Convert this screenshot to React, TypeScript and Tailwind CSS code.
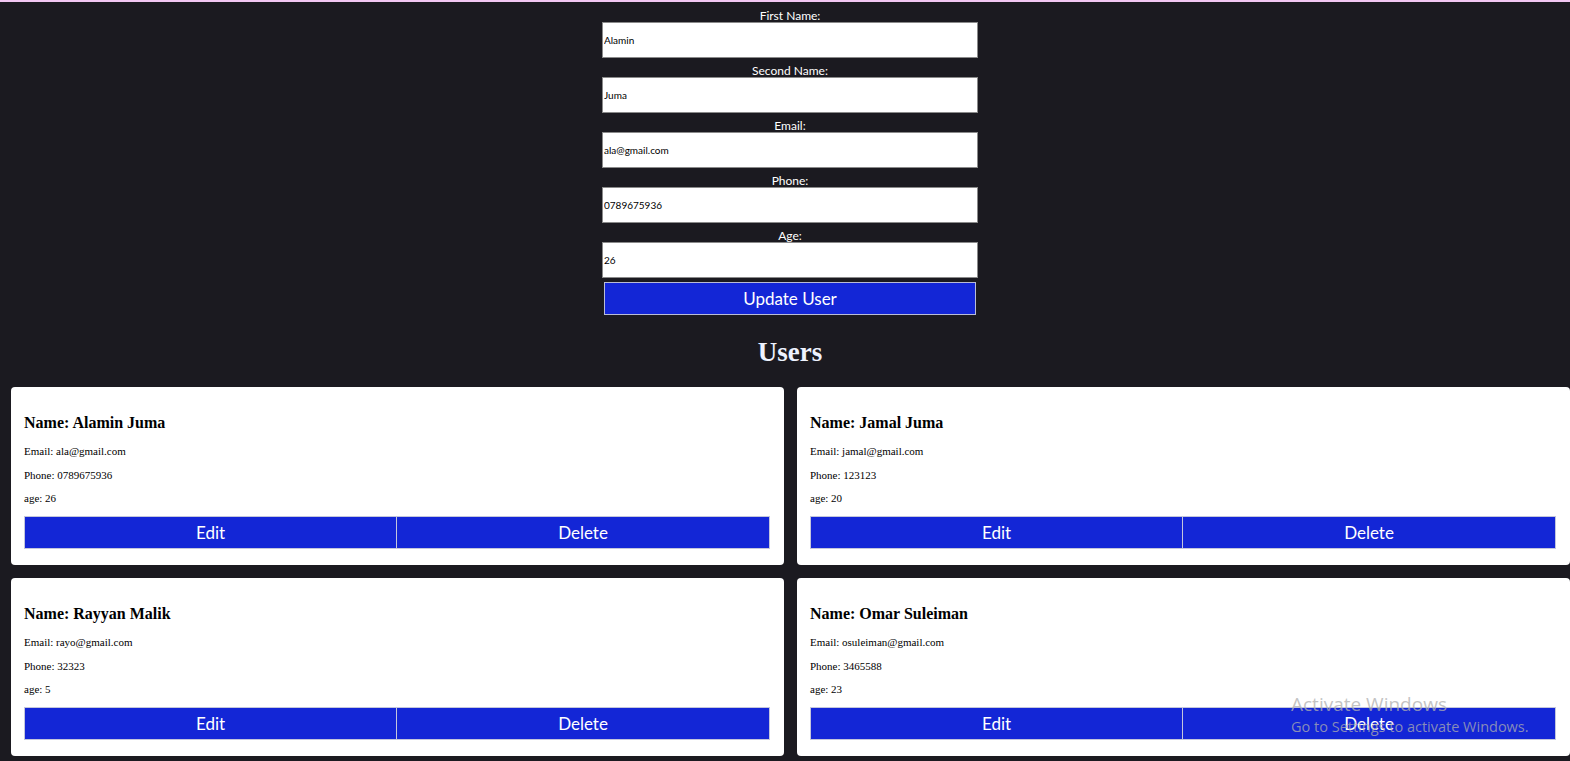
import React from "react";

interface User {
  first: string;
  last: string;
  email: string;
  phone: string;
  age: number;
}

const users: User[] = [
  { first: "Alamin", last: "Juma", email: "ala@gmail.com", phone: "0789675936", age: 26 },
  { first: "Jamal", last: "Juma", email: "jamal@gmail.com", phone: "123123", age: 20 },
  { first: "Rayyan", last: "Malik", email: "rayo@gmail.com", phone: "32323", age: 5 },
  { first: "Omar", last: "Suleiman", email: "osuleiman@gmail.com", phone: "3465588", age: 23 },
];

const fields = [
  { label: "First Name:", value: "Alamin" },
  { label: "Second Name:", value: "Juma" },
  { label: "Email:", value: "ala@gmail.com" },
  { label: "Phone:", value: "0789675936" },
  { label: "Age:", value: "26" },
];

const sans = "font-['Lato','Open_Sans',sans-serif]";
const serif = "font-['Liberation_Serif','Times_New_Roman',serif]";

const UserCard = ({ user }: { user: User }) => (
  <div className={`bg-white rounded-[4px] pt-[27px] pb-[16px] pl-[13px] pr-[14px] text-black ${serif}`}>
    <h3 className="text-[16px] leading-[18px] font-bold">
      Name: {user.first} {user.last}
    </h3>
    <p className="text-[11px] leading-[14px] mt-[12px]">Email: {user.email}</p>
    <p className="text-[11px] leading-[14px] mt-[10px]">Phone: {user.phone}</p>
    <p className="text-[11px] leading-[14px] mt-[9px]">age: {user.age}</p>
    <div className={`grid grid-cols-2 mt-[11px] ${sans}`}>
      <button className="h-[33px] pt-[1px] bg-[#1326d6] text-white text-[17px] border border-[#c3c6dc]">Edit</button>
      <button className="h-[33px] pt-[1px] bg-[#1326d6] text-white text-[17px] border border-l-0 border-[#c3c6dc]">Delete</button>
    </div>
  </div>
);

export default function App() {
  return (
    <div className="relative min-h-[761px] bg-[#1b1a20] border-t-2 border-[#f2c7f2] pb-[4px]">
      <div className="pl-[10px]">
        {/* update form */}
        <form className={`w-[376px] mx-auto pt-[5px] flex flex-col ${sans}`} onSubmit={(e) => e.preventDefault()}>
          {fields.map((f, i) => (
            <div key={f.label} className={i > 0 ? "mt-[4px]" : ""}>
              <label className="block text-center text-white text-[12px] leading-[15px] pt-[1px] -mb-[1px]">{f.label}</label>
              <input
                defaultValue={f.value}
                className="block w-full h-[36px] bg-white border border-[#8a8a8a] px-[1px] text-[10px] text-black outline-none"
              />
            </div>
          ))}
          <button
            type="submit"
            className="mt-[4px] mx-[2px] h-[33px] bg-[#1326d6] border border-[#b9bcd6] text-white text-[17px]"
          >
            Update User
          </button>
        </form>

        <h2 className={`text-center text-[#eef3ff] text-[27px] leading-[30px] font-bold mt-[22px] mb-[20px] ${serif}`}>
          Users
        </h2>
      </div>

      <div className="grid grid-cols-2 gap-[13px] pl-[11px]">
        {users.map((u) => (
          <UserCard key={u.email} user={u} />
        ))}
      </div>

      {/* windows activation watermark */}
      <div className="absolute left-[1291px] top-[690px] pointer-events-none text-[rgba(175,175,175,0.75)] font-['Open_Sans',sans-serif]">
        <div className="text-[19px] leading-[24px]">Activate Windows</div>
        <div className="text-[14.5px] leading-[20px] mt-[1px]">Go to Settings to activate Windows.</div>
      </div>
    </div>
  );
}
